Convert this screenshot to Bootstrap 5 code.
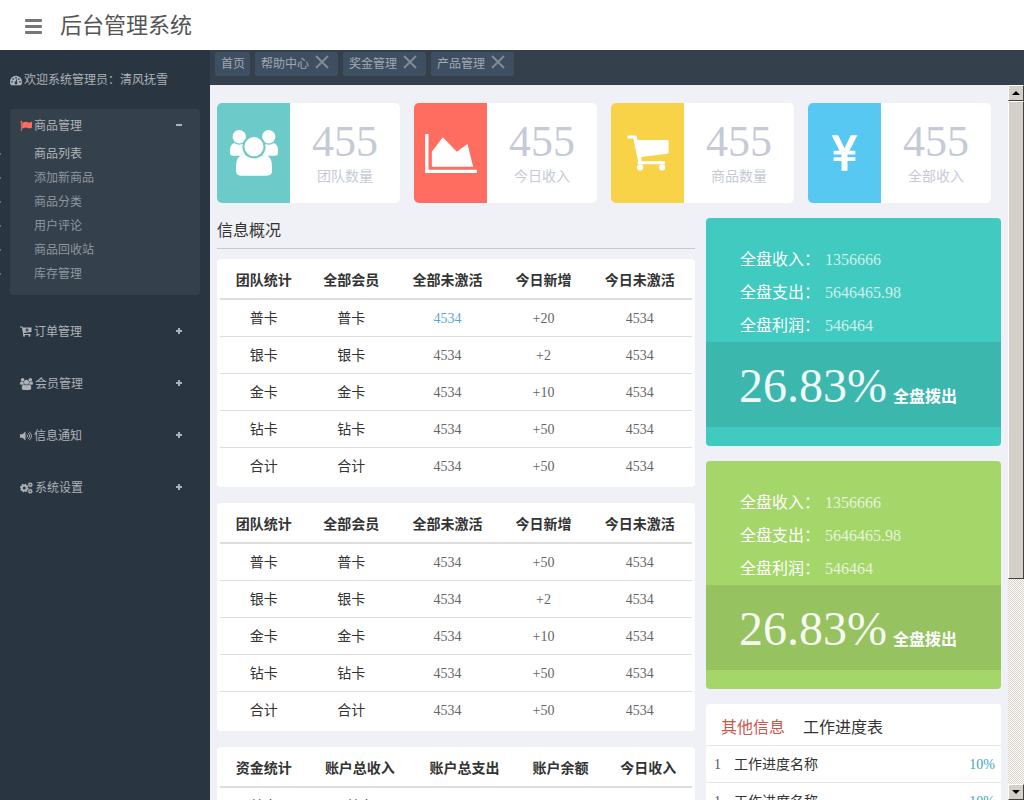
<!DOCTYPE html>
<html lang="zh-CN">
<head>
<meta charset="utf-8">
<meta name="viewport" content="width=device-width, initial-scale=1">
<title>后台管理系统</title>
<link rel="stylesheet" href="https://cdn.jsdelivr.net/npm/bootstrap@5.3.0/dist/css/bootstrap.min.css">
<style>
  body { font-family: "Liberation Serif", "Noto Sans CJK SC", sans-serif; font-size: 14px; line-height: 20px; color: #333; background: #fff; }
  a { text-decoration: none; color: inherit; }
  svg { display: block; flex: none; }

  .top-bar { height: 50px; padding: 2px 24px 0; gap: 18px; color: #777; }
  .top-bar h1 { font-size: 22px; line-height: 32px; color: #555; }
  .plain-btn { border: 0; padding: 0; background: none; color: inherit; }

  .side { width: 210px; background: #2a3542; color: #aeb2b7; font-size: 12px; padding: 20px 10px; }
  .welcome { gap: 2px; margin-bottom: 19px; }
  .group-box { border-radius: 4px; margin-bottom: 20px; }
  .group-box.opened { background: #35404d; padding-bottom: 9px; }
  .group-head { height: 32px; padding: 1px 17px 0 10px; gap: 2px; color: #aeb2b7; }
  .group-head .sign { margin-left: auto; }
  .group-items { padding-top: 1px; }
  .group-items li { position: relative; line-height: 24px; padding-left: 24px; color: #8f979e; }
  .group-items li:first-child { color: #aeb6bb; }
  .group-items li::before { content: ""; position: absolute; left: -10px; top: 11px; width: 1px; height: 2px; background: #66707a; }

  .tab-strip { height: 35px; padding: 2px 5px; gap: 5px; background: #35404d; }
  .tab-item { height: 24px; padding: 0 8px 0 6px; gap: 5px; border-radius: 2px; background: #3e4f61; color: #a0a9b3; font-size: 12px; }
  .tab-item.home { padding-right: 5px; }
  .tab-item button { color: #7f8993; }

  .page-body { background: #f0f1f6; padding: 18px 7px 0; overflow: auto; scrollbar-width: none; }
  .page-body::-webkit-scrollbar { display: none; }

  .tiles { display: grid; grid-template-columns: repeat(4, 1fr); column-gap: 14px; margin: 0 10px 15px 0; }
  .tile { height: 100px; border-radius: 5px; background: #fff; overflow: hidden; color: #c6cad6; }
  .tile-icon { width: 40%; color: #fff; }
  .tile-num { font-size: 44px; line-height: 46px; margin-bottom: 2px; }
  .teal { background: #6ccac9; }
  .coral { background: #ff6c60; }
  .gold { background: #f8d347; }
  .sky { background: #57c8f2; }

  .columns { display: grid; grid-template-columns: 478fr 295fr; column-gap: 11px; }
  .section-title { font-size: 16px; line-height: 24px; padding: 1px 0 5px; margin-bottom: 10px; border-bottom: 1px solid #c8cacf; }

  .white-box { background: #fff; border-radius: 4px; }
  .table-box { padding: 3px; margin-bottom: 16px; }
  .stat-table { width: 100%; text-align: center; color: #666; }
  .stat-table th { padding: 9px 8px 7px; border-bottom: 2px solid #ddd; color: #333; font-weight: 700; }
  .stat-table td { padding: 9px 8px 7px; border-bottom: 1px solid #ddd; }
  .stat-table td:nth-child(-n+2) { color: #333; }
  .stat-table tbody tr:last-child td { border-bottom: 0; }
  .stat-table a { color: #58a9d0; }

  .summary { border-radius: 4px; padding: 25px 0 19px; margin-bottom: 15px; font-size: 16px; color: #fff; }
  .summary dl { padding-left: 34px; line-height: 33px; }
  .summary dt { font-weight: 400; }
  .summary dd { margin: 0 0 0 5px; opacity: .72; }
  .rate { height: 85px; padding-left: 33px; gap: 6px; background: rgba(0, 0, 0, .09); line-height: 87px; }
  .rate span { font-size: 48px; opacity: .92; }
  .mint { background: #41cac0; }
  .lime { background: #a5d66a; }

  .progress-tabs { padding: 12px 15px 6px; gap: 18px; font-size: 16px; line-height: 24px; height: 41px; }
  .progress-tabs .current { color: #c8574d; }
  .work-list li { height: 37px; padding: 1px 6px 0 8px; gap: 13px; border-top: 1px solid #e6e8ea; }
  .work-list b { font-weight: 400; margin-left: auto; color: #41a5ba; }
  .work-list i { font-style: normal; color: #555; }

  .scroll-rail { width: 16px; background: repeating-conic-gradient(#d4d0c8 0 25%, #fff 0 50%) 0 0 / 2px 2px; }
  .scroll-rail button, .scroll-thumb { background: #d4d0c8; border: 1px solid; border-color: #fff #404040 #404040 #fff; }
  .scroll-rail button { height: 16px; padding: 0; }
  .scroll-thumb { height: 70%; }
</style>
</head>
<body>
<div class="d-flex flex-column vh-100 overflow-hidden">
  <header class="top-bar d-flex align-items-center flex-shrink-0">
    <button class="plain-btn" type="button" aria-label="切换菜单">
      <svg width="18" height="15" viewBox="0 0 18 15" fill="currentColor"><rect x="1" width="17" height="3" rx="1"/><rect x="1" y="6" width="17" height="3" rx="1"/><rect x="1" y="12" width="17" height="3" rx="1"/></svg>
    </button>
    <h1 class="m-0 fw-normal">后台管理系统</h1>
  </header>

  <div class="d-flex flex-grow-1 overflow-hidden">
    <aside class="side flex-shrink-0">
      <div class="welcome d-flex align-items-center">
        <svg width="12" height="11" viewBox="0 0 24 21"><path fill="currentColor" d="M12 1a12 12 0 0 0-12 12c0 3 .8 5 2 7h20c1.200-2 2-4 2-7A12 12 0 0 0 12 1z"/><g fill="#2a3542"><circle cx="4" cy="13" r="1.700"/><circle cx="6.500" cy="7.500" r="1.700"/><circle cx="12" cy="5" r="1.700"/><circle cx="17.500" cy="7.500" r="1.700"/><circle cx="20" cy="13" r="1.700"/><circle cx="12" cy="15.500" r="2.800"/><path d="M11 14l2-6.500 1.500.4-1.500 6.600z"/></g></svg>
        <span>欢迎系统管理员：清风抚雪</span>
      </div>
      <nav>
        <div class="group-box opened">
          <a href="#" class="group-head d-flex align-items-center">
            <svg width="12" height="12" viewBox="0 0 1792 1792" fill="#ff6c60"><path d="M320 256q0 72-64 110v1266q0 13-9.500 22.500T224 1664h-64q-13 0-22.500-9.500T128 1632V366q-64-38-64-110 0-53 37.500-90.500T192 128t90.500 37.500T320 256zm1472 64v763q0 25-12.500 38.500T1740 1149q-215 116-369 116-61 0-123.500-22t-108.500-48-115.500-48-142.500-22q-192 0-464 146-17 9-33 9-26 0-45-19t-19-45V474q0-32 31-55 21-14 79-43 236-120 421-120 107 0 200 29t219 88q38 19 88 19 54 0 117.500-21t110-47 88-47 54.500-21q26 0 45 19t19 45z"/></svg>
            <span>商品管理</span>
            <svg class="sign" width="8" height="8" viewBox="0 0 8 8" fill="currentColor"><path d="M1 2h6v2H1z"/></svg>
          </a>
          <ul class="group-items list-unstyled m-0">
            <li><a href="#">商品列表</a></li>
            <li><a href="#">添加新商品</a></li>
            <li><a href="#">商品分类</a></li>
            <li><a href="#">用户评论</a></li>
            <li><a href="#">商品回收站</a></li>
            <li><a href="#">库存管理</a></li>
          </ul>
        </div>
        <div class="group-box">
          <a href="#" class="group-head d-flex align-items-center">
            <svg width="12" height="11" viewBox="0 0 24 22"><path fill="currentColor" d="M0 1h5l1 2h17v9L8 14l.5 2H21v2H6.500L4 3H0z"/><circle cx="8" cy="19.500" r="2" fill="currentColor"/><circle cx="19" cy="19.500" r="2" fill="currentColor"/><path d="M14 4.500v7M10.500 8h7" stroke="#2a3542" stroke-width="2"/></svg>
            <span>订单管理</span>
            <svg class="sign" width="8" height="8" viewBox="0 0 8 8" fill="currentColor"><path d="M3 0h2v2h2v2H5v2H3V4H1V2h2z"/></svg>
          </a>
        </div>
        <div class="group-box">
          <a href="#" class="group-head d-flex align-items-center">
            <svg width="13" height="12" viewBox="0 0 1920 1792" fill="currentColor"><path d="M593 896q-162 5-265 128H194q-82 0-138-40.500T0 865q0-353 124-353 6 0 43.500 21t97.500 42.500T384 597q67 0 133-23-5 37-5 66 0 139 81 256zm1071 637q0 120-73 189.500t-194 69.500H523q-121 0-194-69.500T256 1533q0-53 3.500-103.500t14-109T300 1212t43-97.500 62-81 85.500-53.500T602 960q10 0 43 21.500t73 48 107 48 135 21.500 135-21.500 107-48 73-48 43-21.500q61 0 111.500 20t85.500 53.500 62 81 43 97.500 26.500 108.500 14 109 3.500 103.500zM640 256q0 106-75 181t-181 75-181-75-75-181 75-181T384 0t181 75 75 181zm704 384q0 159-112.500 271.500T960 1024 688.500 911.500 576 640t112.500-271.500T960 256t271.500 112.500T1344 640zm576 225q0 78-56 118.500t-138 40.500h-134q-103-123-265-128 81-117 81-256 0-29-5-66 66 23 133 23 59 0 119-21.500t97.500-42.500 43.500-21q124 0 124 353zm-128-609q0 106-75 181t-181 75-181-75-75-181 75-181 181-75 181 75 75 181z"/></svg>
            <span>会员管理</span>
            <svg class="sign" width="8" height="8" viewBox="0 0 8 8" fill="currentColor"><path d="M3 0h2v2h2v2H5v2H3V4H1V2h2z"/></svg>
          </a>
        </div>
        <div class="group-box">
          <a href="#" class="group-head d-flex align-items-center">
            <svg width="12" height="10" viewBox="0 0 24 20"><path fill="currentColor" d="M0 6.500h5L11 1v18l-6-5.500H0z"/><path d="M13.500 7q3.500 3 0 6M16 4q6.500 6 0 12M18.500 1.500q9 8.500 0 17" fill="none" stroke="currentColor" stroke-width="1.800"/></svg>
            <span>信息通知</span>
            <svg class="sign" width="8" height="8" viewBox="0 0 8 8" fill="currentColor"><path d="M3 0h2v2h2v2H5v2H3V4H1V2h2z"/></svg>
          </a>
        </div>
        <div class="group-box">
          <a href="#" class="group-head d-flex align-items-center">
            <svg width="13" height="12" viewBox="0 0 26 24" fill="none" stroke="currentColor"><circle cx="8.500" cy="12" r="5" stroke-width="4"/><circle cx="8.500" cy="12" r="7.500" stroke-width="2.500" stroke-dasharray="3 2.890"/><circle cx="20.500" cy="5.500" r="2.900" stroke-width="2.600"/><circle cx="20.500" cy="5.500" r="4.600" stroke-width="1.400" stroke-dasharray="2 1.610"/><circle cx="20.500" cy="18.500" r="2.900" stroke-width="2.600"/><circle cx="20.500" cy="18.500" r="4.600" stroke-width="1.400" stroke-dasharray="2 1.610"/></svg>
            <span>系统设置</span>
            <svg class="sign" width="8" height="8" viewBox="0 0 8 8" fill="currentColor"><path d="M3 0h2v2h2v2H5v2H3V4H1V2h2z"/></svg>
          </a>
        </div>
      </nav>
    </aside>

    <div class="d-flex flex-column flex-grow-1 overflow-hidden">
      <div class="tab-strip d-flex flex-shrink-0">
        <div class="tab-item home d-flex align-items-center"><a href="#">首页</a></div>
        <div class="tab-item d-flex align-items-center"><a href="#">帮助中心</a><button class="plain-btn" type="button" aria-label="关闭帮助中心"><svg width="16" height="18" viewBox="0 0 16 18"><path d="M2 1l12 12M14 1L2 13" stroke="currentColor" stroke-width="2.200"/></svg></button></div>
        <div class="tab-item d-flex align-items-center"><a href="#">奖金管理</a><button class="plain-btn" type="button" aria-label="关闭奖金管理"><svg width="16" height="18" viewBox="0 0 16 18"><path d="M2 1l12 12M14 1L2 13" stroke="currentColor" stroke-width="2.200"/></svg></button></div>
        <div class="tab-item d-flex align-items-center"><a href="#">产品管理</a><button class="plain-btn" type="button" aria-label="关闭产品管理"><svg width="16" height="18" viewBox="0 0 16 18"><path d="M2 1l12 12M14 1L2 13" stroke="currentColor" stroke-width="2.200"/></svg></button></div>
      </div>

      <div class="d-flex flex-grow-1 overflow-hidden">
        <main class="page-body flex-grow-1">
          <div class="tiles">
            <section class="tile d-flex">
              <div class="tile-icon teal d-flex align-items-center justify-content-center">
                <svg width="48" height="46" viewBox="0 0 48 46" fill="currentColor"><circle cx="9.300" cy="6.700" r="6.700"/><circle cx="38.700" cy="6.700" r="6.700"/><path d="M4 13q5 3.500 10.500 0l3 6-2.500 6.700H3q-3 0-3-3V20q0-5 4-7zM44 13q-5 3.500-10.500 0l-3 6 2.500 6.700H45q3 0 3-3V20q0-5-4-7z"/><path d="M13 24.500q11 6 22 0 7 2 7 12v4q0 5.200-5 5.200H11q-5 0-5-5.200v-4q0-10 7-12z"/><circle cx="24" cy="16.700" r="10.600" stroke="#6ccac9" stroke-width="2"/></svg>
              </div>
              <div class="flex-grow-1 text-center pt-3"><div class="tile-num">455</div><div>团队数量</div></div>
            </section>
            <section class="tile d-flex">
              <div class="tile-icon coral d-flex align-items-center justify-content-center">
                <svg width="52" height="39" viewBox="0 0 155 117" fill="currentColor"><path d="M0 0h10v107h145v10H0zM20 98V53l33-43 42 43 32-23 17 68z"/></svg>
              </div>
              <div class="flex-grow-1 text-center pt-3"><div class="tile-num">455</div><div>今日收入</div></div>
            </section>
            <section class="tile d-flex">
              <div class="tile-icon gold d-flex align-items-center justify-content-center">
                <svg width="42" height="36" viewBox="80 124 128 108" fill="currentColor"><path d="M84 125h22q3 0 4 4l2 9h90q5 0 5 5v32q0 4-4 5l-80 10 2 13h67q4 0 4 4v5h-81q-4 0-3-4l2-5-15-69H84q-3 0-3-4.500t3-4.500z"/><circle cx="120" cy="222" r="9.500"/><circle cx="187" cy="222" r="9.500"/></svg>
              </div>
              <div class="flex-grow-1 text-center pt-3"><div class="tile-num">455</div><div>商品数量</div></div>
            </section>
            <section class="tile d-flex">
              <div class="tile-icon sky d-flex align-items-center justify-content-center">
                <svg width="27" height="36" viewBox="95 159 80 109" fill="currentColor"><path d="M96 160h20l19 39 19-39h20l-24 47h18v11h-24v8h24v12h-24v29h-18v-29h-24v-12h24v-8h-24v-11h18z"/></svg>
              </div>
              <div class="flex-grow-1 text-center pt-3"><div class="tile-num">455</div><div>全部收入</div></div>
            </section>
          </div>

          <div class="columns">
            <div>
              <h2 class="section-title fw-normal">信息概况</h2>
              <div class="white-box table-box">
                <table class="stat-table">
                  <thead><tr><th>团队统计</th><th>全部会员</th><th>全部未激活</th><th>今日新增</th><th>今日未激活</th></tr></thead>
                  <tbody>
                    <tr><td>普卡</td><td>普卡</td><td><a href="#">4534</a></td><td>+20</td><td>4534</td></tr>
                    <tr><td>银卡</td><td>银卡</td><td>4534</td><td>+2</td><td>4534</td></tr>
                    <tr><td>金卡</td><td>金卡</td><td>4534</td><td>+10</td><td>4534</td></tr>
                    <tr><td>钻卡</td><td>钻卡</td><td>4534</td><td>+50</td><td>4534</td></tr>
                    <tr><td>合计</td><td>合计</td><td>4534</td><td>+50</td><td>4534</td></tr>
                  </tbody>
                </table>
              </div>
              <div class="white-box table-box">
                <table class="stat-table">
                  <thead><tr><th>团队统计</th><th>全部会员</th><th>全部未激活</th><th>今日新增</th><th>今日未激活</th></tr></thead>
                  <tbody>
                    <tr><td>普卡</td><td>普卡</td><td>4534</td><td>+50</td><td>4534</td></tr>
                    <tr><td>银卡</td><td>银卡</td><td>4534</td><td>+2</td><td>4534</td></tr>
                    <tr><td>金卡</td><td>金卡</td><td>4534</td><td>+10</td><td>4534</td></tr>
                    <tr><td>钻卡</td><td>钻卡</td><td>4534</td><td>+50</td><td>4534</td></tr>
                    <tr><td>合计</td><td>合计</td><td>4534</td><td>+50</td><td>4534</td></tr>
                  </tbody>
                </table>
              </div>
              <div class="white-box table-box">
                <table class="stat-table">
                  <thead><tr><th>资金统计</th><th>账户总收入</th><th>账户总支出</th><th>账户余额</th><th>今日收入</th></tr></thead>
                  <tbody>
                    <tr><td>普卡</td><td>普卡</td><td>4534</td><td>+50</td><td>4534</td></tr>
                  </tbody>
                </table>
              </div>
            </div>

            <div>
              <section class="summary mint">
                <dl class="m-0">
                  <div class="d-flex"><dt>全盘收入：</dt><dd>1356666</dd></div>
                  <div class="d-flex"><dt>全盘支出：</dt><dd>5646465.98</dd></div>
                  <div class="d-flex"><dt>全盘利润：</dt><dd>546464</dd></div>
                </dl>
                <div class="rate d-flex align-items-baseline"><span>26.83%</span><strong>全盘拨出</strong></div>
              </section>
              <section class="summary lime">
                <dl class="m-0">
                  <div class="d-flex"><dt>全盘收入：</dt><dd>1356666</dd></div>
                  <div class="d-flex"><dt>全盘支出：</dt><dd>5646465.98</dd></div>
                  <div class="d-flex"><dt>全盘利润：</dt><dd>546464</dd></div>
                </dl>
                <div class="rate d-flex align-items-baseline"><span>26.83%</span><strong>全盘拨出</strong></div>
              </section>
              <section class="white-box">
                <div class="progress-tabs d-flex align-items-center"><a href="#" class="current">其他信息</a><a href="#">工作进度表</a></div>
                <ul class="work-list list-unstyled m-0">
                  <li class="d-flex align-items-center"><i>1</i><span>工作进度名称</span><b>10%</b></li>
                  <li class="d-flex align-items-center"><i>1</i><span>工作进度名称</span><b>10%</b></li>
                  <li class="d-flex align-items-center"><i>1</i><span>工作进度名称</span><b>10%</b></li>
                </ul>
              </section>
            </div>
          </div>
        </main>

        <div class="scroll-rail d-flex flex-column flex-shrink-0">
          <button class="d-flex align-items-center justify-content-center flex-shrink-0" type="button" aria-label="向上滚动"><svg width="8" height="4" viewBox="0 0 8 4"><path d="M4 0l4 4H0z"/></svg></button>
          <div class="flex-grow-1"><div class="scroll-thumb"></div></div>
          <button class="d-flex align-items-center justify-content-center flex-shrink-0" type="button" aria-label="向下滚动"><svg width="8" height="4" viewBox="0 0 8 4"><path d="M4 4l4-4H0z"/></svg></button>
        </div>
      </div>
    </div>
  </div>
</div>
<script src="https://cdn.jsdelivr.net/npm/bootstrap@5.3.0/dist/js/bootstrap.bundle.min.js"></script>
</body>
</html>
